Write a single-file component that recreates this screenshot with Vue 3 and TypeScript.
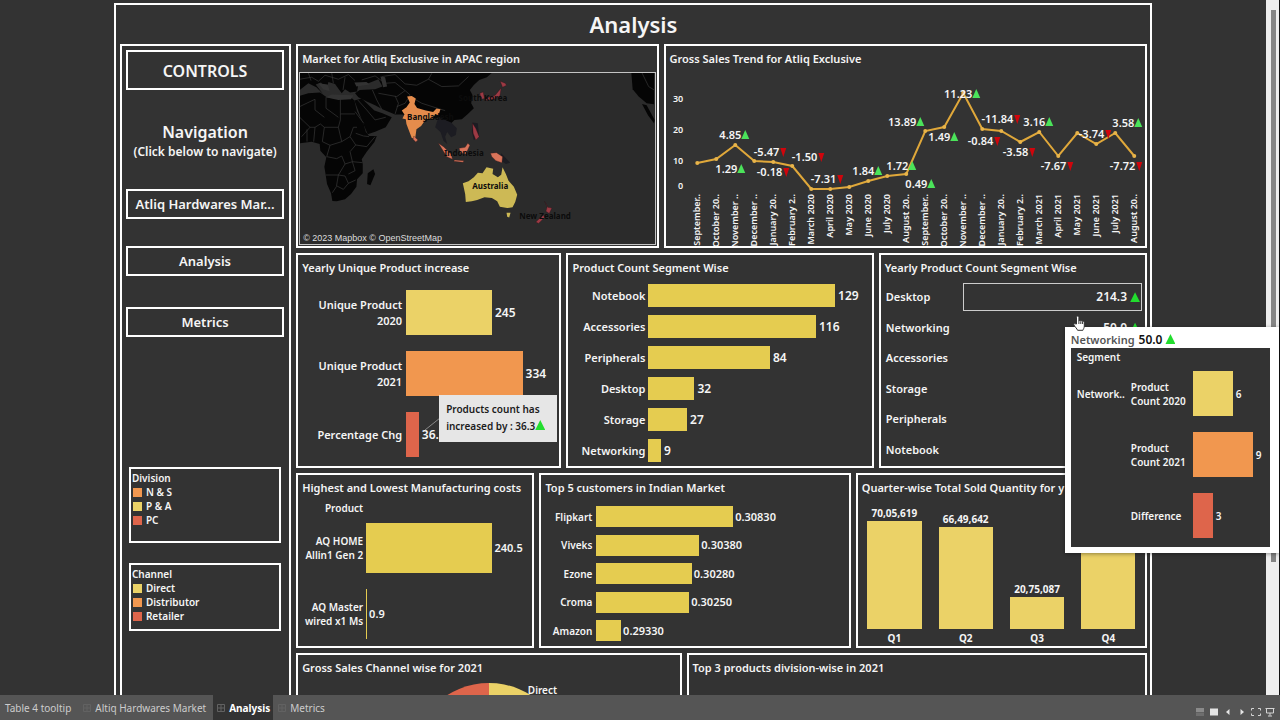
<script setup lang="ts">
interface Bar {
  label: string
  value: string
  size: number
  tone: string
}
interface Mark {
  text: string
  x: number
  y: number
  up: boolean
}

const bars = (tone: string, rows: [string, string, number][]): Bar[] =>
  rows.map(([label, value, size]) => ({ label, value, size, tone }))

const unique: Bar[] = [
  { label: 'Unique Product 2020', value: '245', size: 56, tone: 'sand' },
  { label: 'Unique Product 2021', value: '334', size: 76, tone: 'orange' },
  { label: 'Percentage Chg', value: '36.3', size: 8.3, tone: 'red' },
]
const segments = bars('gold', [
  ['Notebook', '129', 83.6],
  ['Accessories', '116', 75],
  ['Peripherals', '84', 54.4],
  ['Desktop', '32', 20.6],
  ['Storage', '27', 17.3],
  ['Networking', '9', 5.6],
])
const costs = bars('gold', [
  ['AQ HOME Allin1 Gen 2', '240.5', 76],
  ['AQ Master wired x1 Ms', '0.9', 0.6],
])
const customers = bars('gold', [
  ['Flipkart', '0.30830', 54.2],
  ['Viveks', '0.30380', 40.8],
  ['Ezone', '0.30280', 37.8],
  ['Croma', '0.30250', 36.8],
  ['Amazon', '0.29330', 9.8],
])
const counts: Bar[] = [
  { label: 'Product Count 2020', value: '6', size: 52, tone: 'sand' },
  { label: 'Product Count 2021', value: '9', size: 78, tone: 'orange' },
  { label: 'Difference', value: '3', size: 26, tone: 'red' },
]
const yearly = [
  { name: 'Desktop', value: '214.3' },
  { name: 'Networking', value: '50.0' },
  { name: 'Accessories', value: '' },
  { name: 'Storage', value: '' },
  { name: 'Peripherals', value: '' },
  { name: 'Notebook', value: '' },
]
const quarters = [
  { name: 'Q1', value: '70,05,619', size: 108 },
  { name: 'Q2', value: '66,49,642', size: 102 },
  { name: 'Q3', value: '20,75,087', size: 32 },
  { name: 'Q4', value: '', size: 90 },
]
const legends = [
  { title: 'Division', items: [['orange', 'N & S'], ['sand', 'P & A'], ['red', 'PC']] },
  { title: 'Channel', items: [['sand', 'Direct'], ['orange', 'Distributor'], ['red', 'Retailer']] },
]

const months = [
  'September..', 'October 20..', 'November ..', 'December ..', 'January 20..', 'February 2..',
  'March 2020', 'April 2020', 'May 2020', 'June 2020', 'July 2020', 'August 20..',
  'September..', 'October 20..', 'November ..', 'December ..', 'January 20..', 'February 2..',
  'March 2021', 'April 2021', 'May 2021', 'June 2021', 'July 2021', 'August 20..',
]
const levels = [97, 93, 79, 95, 96, 100, 123, 123, 121, 115, 110, 108, 65, 61, 27, 63, 65, 76, 66, 90, 67, 78, 67, 90]
const points = levels.map((y, i) => ({ x: 31 + i * 19, y }))
const trend = points.map((p) => `${p.x},${p.y}`).join(' ')
const ticks = [['30', 33], ['20', 64], ['10', 95], ['0', 120]]

const rawMarks: [string, number, number, boolean][] = [
  ['4.85', 79, 69, true], ['1.29', 75, 103, true], ['-5.47', 117, 86, false], ['-0.18', 120, 106, false],
  ['-1.50', 155, 91, false], ['-7.31', 174, 113, false], ['1.84', 212, 105, true], ['1.72', 246, 100, true],
  ['0.49', 265, 118, true], ['13.89', 254, 56, true], ['1.49', 288, 71, true], ['11.23', 310, 28, true],
  ['-0.84', 331, 75, false], ['-11.84', 351, 53, false], ['-3.58', 366, 86, false], ['3.16', 383, 56, true],
  ['-7.67', 404, 100, false], ['-3.74', 442, 68, false], ['3.58', 472, 57, true], ['-7.72', 473, 100, false],
]
const marks: Mark[] = rawMarks.map(([text, x, y, up]) => ({ text, x, y, up }))
const arrow = (m: Mark): string =>
  m.up
    ? `${m.x - 4},${m.y + 4} ${m.x},${m.y - 5} ${m.x + 4},${m.y + 4}`
    : `${m.x - 3},${m.y - 4} ${m.x},${m.y + 5} ${m.x + 3},${m.y - 4}`
</script>

<template>
  <div class="page">
    <div class="viewport">
      <main class="canvas">
        <div class="dashboard">
          <h1>Analysis</h1>
          <div class="layout">
            <aside class="sidebar">
              <h2 class="controls">CONTROLS</h2>
              <h2 class="nav-title">Navigation</h2>
              <p class="nav-hint">(Click below to navigate)</p>
              <nav>
                <button type="button">Atliq Hardwares Mar...</button>
                <button type="button">Analysis</button>
                <button type="button">Metrics</button>
              </nav>
              <section v-for="l in legends" :key="l.title" class="legend">
                <h3>{{ l.title }}</h3>
                <ul>
                  <li v-for="i in l.items" :key="i[1]"><i :class="i[0]"></i>{{ i[1] }}</li>
                </ul>
              </section>
            </aside>

            <div class="rows">
              <div class="row row-a">
                <section class="panel">
                  <h3>Market for Atliq Exclusive in APAC region</h3>
                  <div class="map">
                    <svg viewBox="0 0 354 171" preserveAspectRatio="xMidYMid slice" role="img" aria-label="Market map">
                      <g transform="translate(-5 -33) scale(.3333)">
                        <g class="land">
                          <path d="M14 168 40 160 75 158 95 172 130 178 165 170 178 182 186 215 205 250 212 275 222 288 245 288 238 306 215 335 200 358 203 372 203 400 186 418 184 440 168 462 150 478 125 484 112 483 108 460 96 432 92 405 88 380 94 352 76 332 74 312 50 305 14 310Z" />
                          <path d="M178 182 200 176 215 190 238 212 262 220 290 232 272 262 240 275 218 283 206 255Z" />
                          <path d="M14 99H590L575 112 552 120 536 135 524 150 532 165 528 190 536 205 518 222 500 238 478 240 468 250 455 245 445 238 432 232 400 240 345 240 325 224 300 224 262 208 240 196 215 185 190 172 180 160 194 150 240 148 262 140 250 118 220 130 190 132 186 155 165 158 150 148 140 160 120 132 100 126 95 150 78 128 62 134 84 162 64 142 40 130 14 150Z" />
                          <path d="M218 400 235 388 240 402 226 436 216 432Z" />
                          <path d="M1008 99H1076V193L1054 190 1030 170 1012 148Z" />
                          <path d="M1040 192 1054 196 1078 240 1076 250 1058 226Z" />
                        </g>
                        <path class="dim" d="M430 232 468 248 485 265 482 285 468 292 456 276 450 290 456 312 445 302 436 276 420 262ZM532 248 548 250 552 290 536 300 530 275ZM618 340 645 368 632 372 612 358Z" />
                        <path class="borders" d="M14 232 45 262 20 290M60 178V210L88 232M93 172V205L130 232M136 178V222H180M136 222V240L130 262H88L76 252 60 262 45 262M14 200 60 178M36 268V305M60 262 56 305M88 262 82 305 105 316 140 305 130 262M140 305 165 290 175 262 186 262M165 290 182 315 165 335 172 365M105 316 95 350 125 356 140 348 150 372 130 405H92M130 405 124 440 112 458M130 405 150 408 160 430 145 448 126 438M172 365 202 368M150 372 172 365 180 392 160 402M182 315 215 320 240 290M182 280 205 288 222 290M160 430 182 420M180 215 206 250M188 180 215 210 240 240 272 232M200 120 240 108 270 130 300 128 330 152 305 170 250 160M232 150 245 180 260 208M300 168 310 190 300 222M330 152 345 165 330 190 305 200M260 110 300 104 330 132 365 136 400 118 410 100M400 118 440 140 490 138 520 110M345 170 380 190 430 206 450 212M14 118 50 112 70 124 90 106 130 118 160 104 180 122M40 99 48 122M110 99 115 130M150 112 144 150M1040 99 1060 140 1076 150" />
                        <path class="blot" d="M110 164 175 166 168 178 130 180 92 172ZM70 130 98 134 104 154 84 148ZM178 128 214 126 224 134 184 140ZM256 110 270 112 276 140 264 142Z" />
                        <path class="orange-land" d="M336 170 350 168 362 176 358 192 366 204 392 212 414 216 424 206 436 208 430 226 420 222 414 236 392 238 378 258 364 268 360 296 350 294 334 252 332 238 322 236 328 224 320 212 334 202 344 188Z" />
                        <path class="red-land" d="M356 288 368 300 362 306 354 298ZM430 310 445 320 468 342 472 358 455 350ZM478 360 506 362 504 367 476 364ZM492 325 510 322 518 310 524 316 512 342 496 340ZM586 340 604 338 622 350 620 368 602 362 590 350Z" />
                        <path class="crimson" d="M615 124 630 130 634 136 622 142ZM618 144 614 168 596 178 570 182 574 174 600 166ZM554 160 564 156 568 176 558 178ZM532 250 542 266 552 290 542 300 534 280ZM748 484 758 502 770 504 762 520 752 514 756 500ZM744 524 748 532 730 550 722 546Z" />
                        <path class="yellow-land" d="M503 430 520 424 536 412 548 398 562 400 574 382 594 386 592 402 608 412 618 404 622 382 632 402 640 422 656 440 666 464 660 486 652 502 636 504 614 500 606 484 600 480 590 474 568 472 546 480 530 484 512 486 510 462ZM634 518 646 518 642 532 636 530Z" />
                      </g>
                      <text x="107" y="47">Bangladesh</text>
                      <text x="207" y="28" text-anchor="end">South Korea</text>
                      <text x="144" y="83">Indonesia</text>
                      <text x="172" y="116">Australia</text>
                      <text x="219" y="146">New Zealand</text>
                    </svg>
                    <small>© 2023 Mapbox © OpenStreetMap</small>
                  </div>
                </section>
                <section class="panel">
                  <h3>Gross Sales Trend for Atliq Exclusive</h3>
                  <svg class="trend" viewBox="0 0 479 180" role="img" aria-label="Gross sales trend">
                    <text v-for="t in ticks" :key="t[0]" class="axis" x="17" :y="Number(t[1]) + 3" text-anchor="end">{{ t[0] }}</text>
                    <text
                      v-for="(m, i) in months"
                      :key="i"
                      class="axis"
                      text-anchor="end"
                      :transform="`translate(${34 + i * 19} 128) rotate(-90)`"
                    >{{ m }}</text>
                    <polyline :points="trend" />
                    <circle v-for="(p, i) in points" :key="i" :cx="p.x" :cy="p.y" r="2" />
                    <g v-for="m in marks" :key="m.text">
                      <polygon :points="arrow(m)" :class="m.up ? 'up' : 'down'" />
                      <text :x="m.x - 4" :y="m.y + 4" text-anchor="end">{{ m.text }}</text>
                    </g>
                  </svg>
                </section>
              </div>

              <div class="row row-b">
                <section class="panel">
                  <h3>Yearly Unique Product increase</h3>
                  <div class="chart unique">
                    <div v-for="b in unique" :key="b.label" class="bar-row">
                      <span class="name">{{ b.label }}</span>
                      <span class="track"><i :class="b.tone" :style="{ width: b.size + '%' }"></i>{{ b.value }}</span>
                    </div>
                  </div>
                  <svg class="leader" viewBox="0 0 16 14"><path d="M1 13 16 1" /></svg>
                  <div class="note">Products count has increased by : 36.3<b class="tri"></b></div>
                </section>
                <section class="panel">
                  <h3>Product Count Segment Wise</h3>
                  <div class="chart segments">
                    <div v-for="b in segments" :key="b.label" class="bar-row">
                      <span class="name">{{ b.label }}</span>
                      <span class="track"><i :class="b.tone" :style="{ width: b.size + '%' }"></i>{{ b.value }}</span>
                    </div>
                  </div>
                </section>
                <section class="panel">
                  <h3>Yearly Product Count Segment Wise</h3>
                  <table>
                    <tbody>
                      <tr v-for="(y, i) in yearly" :key="y.name">
                        <th scope="row">{{ y.name }}</th>
                        <td>
                          <div :class="{ picked: i === 0 }" class="cell">
                            <template v-if="y.value">{{ y.value }}<b class="tri"></b></template>
                          </div>
                        </td>
                      </tr>
                    </tbody>
                  </table>
                  <div class="popup" role="tooltip">
                    <p><span>Networking</span><strong>50.0</strong><b class="tri"></b></p>
                    <div class="popup-body">
                      <div class="popup-head">Segment</div>
                      <div class="popup-grid">
                        <span class="group">Network..</span>
                        <div class="chart counts">
                          <div v-for="b in counts" :key="b.label" class="bar-row">
                            <span class="name">{{ b.label }}</span>
                            <span class="track"><i :class="b.tone" :style="{ width: b.size + '%' }"></i>{{ b.value }}</span>
                          </div>
                        </div>
                      </div>
                    </div>
                  </div>
                  <svg class="cursor" viewBox="0 0 12 16">
                    <path d="M3.5 9V2.2a1.2 1.2 0 0 1 2.4 0V6a1 1 0 0 1 1.9.2 1 1 0 0 1 1.8.4 1 1 0 0 1 1.7.7V11c0 2-1 3-1.4 4.3H4.6C4 13.6 2.2 12.2.9 10c-.5-1 .6-1.8 1.4-1.2Z" />
                    <path d="M5.9 6v3M7.8 6.5V9M9.6 7v2" />
                  </svg>
                </section>
              </div>

              <div class="row row-c">
                <section class="panel">
                  <h3>Highest and Lowest Manufacturing costs</h3>
                  <div class="costs-head">Product</div>
                  <div class="chart costs">
                    <div v-for="b in costs" :key="b.label" class="bar-row">
                      <span class="name">{{ b.label }}</span>
                      <span class="track"><i :class="b.tone" :style="{ width: b.size + '%' }"></i>{{ b.value }}</span>
                    </div>
                  </div>
                </section>
                <section class="panel">
                  <h3>Top 5 customers in Indian Market</h3>
                  <div class="chart customers">
                    <div v-for="b in customers" :key="b.label" class="bar-row">
                      <span class="name">{{ b.label }}</span>
                      <span class="track"><i :class="b.tone" :style="{ width: b.size + '%' }"></i>{{ b.value }}</span>
                    </div>
                  </div>
                </section>
                <section class="panel">
                  <h3>Quarter-wise Total Sold Quantity for y</h3>
                  <div class="quarters">
                    <div v-for="q in quarters" :key="q.name">
                      <span>{{ q.value }}</span>
                      <i class="sand" :style="{ height: q.size + 'px' }"></i>
                      <span>{{ q.name }}</span>
                    </div>
                  </div>
                </section>
              </div>

              <div class="row row-d">
                <section class="panel">
                  <h3>Gross Sales Channel wise for 2021</h3>
                  <div class="pie">
                    <svg viewBox="0 0 156 156" role="img" aria-label="Sales by channel">
                      <path class="slice-red" d="M78 78V0A78 78 0 0 0 0 78Z" />
                      <path class="slice-sand" d="M78 78V0A78 78 0 0 1 156 78Z" />
                      <path class="slice-orange" d="M78 78H0A78 78 0 0 0 156 78Z" />
                    </svg>
                    <span>Direct</span>
                  </div>
                </section>
                <section class="panel">
                  <h3>Top 3 products division-wise in 2021</h3>
                </section>
              </div>
            </div>
          </div>
        </div>
      </main>
      <div class="scroll" aria-hidden="true"><i></i></div>
    </div>

    <footer>
      <button type="button" class="tab first">Table 4 tooltip</button>
      <button type="button" class="tab second">
        <svg class="grid-icon" viewBox="0 0 8 8"><path d="M.5.5h7v7h-7zM4 .5v7M.5 4h7" /></svg>Altiq Hardwares Market
      </button>
      <button type="button" class="tab active">
        <svg class="grid-icon" viewBox="0 0 8 8"><path d="M.5.5h7v7h-7zM4 .5v7M.5 4h7" /></svg>Analysis
      </button>
      <button type="button" class="tab">
        <svg class="grid-icon" viewBox="0 0 8 8"><path d="M.5.5h7v7h-7zM4 .5v7M.5 4h7" /></svg>Metrics
      </button>
      <div class="tools">
        <button type="button" aria-label="Show filmstrip"><svg viewBox="0 0 10 10"><path class="faint" d="M1 1h8v4H1z" /><path class="fainter" d="M1 5.5h8V9H1z" /></svg></button>
        <button type="button" aria-label="Show tabs"><svg viewBox="0 0 10 10"><path d="M1 1.5h8v7H1z" /></svg></button>
        <button type="button" aria-label="Previous"><svg viewBox="0 0 10 10"><path d="M6.5 2v6L3 5z" /></svg></button>
        <button type="button" aria-label="Next"><svg viewBox="0 0 10 10"><path d="M3.5 2v6L7 5z" /></svg></button>
        <button type="button" aria-label="Full screen"><svg viewBox="0 0 10 10"><path class="line" d="M.5 3.5v-2H3M7 1.5h2.5v2M9.5 6.5v2H7M3 8.5H.5v-2" /></svg></button>
        <button type="button" aria-label="Presentation mode"><svg viewBox="0 0 10 10"><path class="line" d="M.5 1.5h9M1.5 1.5V6h7V1.5M5 6v2.5M3 9h4" /></svg></button>
      </div>
    </footer>
  </div>
</template>

<style>
html,
body {
  margin: 0;
  background: #333;
}
</style>

<style scoped>
.page {
  display: flex;
  flex-direction: column;
  height: 100vh;
  overflow: hidden;
  color: #f5f5f5;
  background: #333;
  font: 600 12px/16px 'Noto Sans', 'Open Sans', sans-serif;
}
.page * {
  box-sizing: border-box;
}
h1,
h2,
h3,
p,
ul {
  margin: 0;
  padding: 0;
  font-weight: 600;
  list-style: none;
}
button {
  font: inherit;
  color: inherit;
  background: none;
  border: 0;
  padding: 0;
}
.viewport {
  display: flex;
  flex: 1;
  min-height: 0;
  overflow: hidden;
}
.canvas {
  flex: 1;
  min-width: 0;
}
.dashboard {
  margin: 3px 9% 0;
  padding: 0 3px 4px 4px;
  border: 2px solid #fff;
}
h1 {
  height: 39px;
  font-size: 22px;
  line-height: 39px;
  text-align: center;
}
.layout {
  display: grid;
  grid-template-columns: minmax(0, 171fr) minmax(0, 850fr);
  gap: 5px;
}
.sidebar {
  border: 2px solid #fff;
  padding: 4px 5px 0 4px;
}
.controls {
  height: 40px;
  border: 2px solid #fff;
  font-size: 16px;
  line-height: 38px;
  text-align: center;
}
.nav-title {
  margin-top: 30px;
  font-size: 16px;
  line-height: 24px;
  text-align: center;
}
.nav-hint {
  text-align: center;
}
nav {
  display: grid;
  gap: 27px;
  margin: 29px 0 130px;
}
nav button {
  height: 30px;
  border: 2px solid #fff;
  padding: 0 2px;
  font-size: 13px;
  white-space: nowrap;
}
nav button:last-child {
  margin-top: 4px;
}
.legend {
  height: 76px;
  margin: 0 3px 20px;
  border: 2px solid #fff;
  padding: 2px 1px;
  font-size: 10px;
  line-height: 14px;
}
.legend + .legend {
  height: 68px;
}
.legend h3 {
  font-size: 10px;
}
.legend li {
  display: flex;
  align-items: center;
  gap: 4px;
  padding-left: 1px;
}
.legend i {
  width: 9px;
  height: 9px;
}
.orange {
  background: #f1974f;
}
.sand {
  background: #ebd267;
}
.gold {
  background: #e5cc50;
}
.red {
  background: #de654b;
}
.rows {
  display: grid;
  grid-template-rows: 204px 215px 175px 200px;
  gap: 5px;
}
.row {
  display: grid;
  gap: 5px;
  min-width: 0;
}
.row-a {
  grid-template-columns: minmax(0, 362fr) minmax(0, 483fr);
}
.row-b {
  grid-template-columns: minmax(0, 265fr) minmax(0, 307fr) minmax(0, 268fr);
}
.row-c {
  grid-template-columns: minmax(0, 238fr) minmax(0, 311fr) minmax(0, 291fr);
}
.row-d {
  grid-template-columns: minmax(0, 385fr) minmax(0, 460fr);
}
.panel {
  position: relative;
  min-width: 0;
  border: 2px solid #fff;
}
.panel h3 {
  height: 20px;
  padding: 4px 4px 0;
  font-size: 11px;
  line-height: 17px;
  white-space: nowrap;
}
.map {
  position: relative;
  height: 173px;
  margin: 6px 1px 0;
  border: 1px solid #c4c4c4;
  background: #2b2b2b;
}
.map svg {
  display: block;
  width: 100%;
  height: 100%;
}
.map text {
  font-size: 8px;
  font-weight: 700;
  fill: #0c0c0c;
}
.map small {
  position: absolute;
  left: 3px;
  bottom: 0;
  font: 9px/12px 'Liberation Sans', sans-serif;
  color: #ddd;
}
.land {
  fill: #050505;
}
.dim {
  fill: #1c1c22;
}
.borders {
  fill: none;
  stroke: #3a3a3a;
  stroke-width: 2;
}
.blot {
  fill: #333;
}
.orange-land {
  fill: #e58c4c;
}
.red-land {
  fill: #d9745a;
  stroke: #401818;
}
.crimson {
  fill: #9c3a44;
  stroke: #2a1015;
}
.yellow-land {
  fill: #cdb955;
}
.trend {
  display: block;
  width: 100%;
  max-height: 180px;
}
.trend text {
  font-size: 11px;
  fill: #f5f5f5;
}
.trend .axis {
  font-size: 9px;
}
.trend polyline {
  fill: none;
  stroke: #e0a83a;
  stroke-width: 2;
}
.trend circle {
  fill: #e8b44a;
}
.up {
  fill: #4be35a;
}
.down {
  fill: #d0050c;
}
.chart {
  display: flex;
  flex-direction: column;
  justify-content: space-between;
}
.bar-row {
  display: flex;
  align-items: center;
}
.name {
  flex: none;
  text-align: right;
}
.track {
  display: flex;
  flex: 1;
  align-items: center;
  gap: 3px;
  height: 100%;
  min-width: 0;
}
.track i {
  flex: none;
  height: 100%;
}
.unique {
  height: 167px;
  margin-top: 15px;
}
.unique .bar-row {
  height: 45px;
}
.unique .name {
  width: 104px;
  margin-right: 4px;
  padding-left: 16px;
  font-size: 11px;
}
.segments {
  height: 178px;
  margin-top: 9px;
}
.segments .bar-row {
  height: 23px;
}
.segments .name {
  width: 77px;
  margin-right: 3px;
  font-size: 11px;
}
.costs-head {
  width: 65px;
  margin-top: 5px;
  font-size: 10px;
  text-align: right;
}
.costs {
  height: 116px;
  margin-top: 7px;
  font-size: 11px;
}
.costs .bar-row {
  height: 50px;
}
.costs .name {
  width: 65px;
  margin-right: 3px;
  font-size: 10px;
  line-height: 14px;
}
.costs .track,
.customers .track {
  gap: 2px;
}
.customers {
  height: 135px;
  margin-top: 11px;
  font-size: 11px;
}
.customers .bar-row {
  height: 21px;
}
.customers .name {
  width: 51px;
  margin-right: 4px;
  font-size: 10px;
}
.leader {
  position: absolute;
  left: 126px;
  top: 162px;
  width: 16px;
  height: 14px;
  fill: none;
  stroke: #8a8a8a;
}
.note {
  position: absolute;
  left: 141px;
  top: 140px;
  width: 118px;
  height: 47px;
  padding: 6px 7px;
  background: #e6e6e6;
  color: #1c1c1c;
  font-size: 10px;
  line-height: 17px;
}
.tri {
  display: inline-block;
  width: 10px;
  height: 10px;
  margin-left: 3px;
  background: #22dd2e;
  clip-path: polygon(50% 0, 100% 100%, 0 100%);
}
.note .tri {
  margin-left: 0;
}
table {
  width: 100%;
  height: 183px;
  margin-top: 7px;
  border-collapse: collapse;
}
th {
  width: 82px;
  padding: 0 0 0 5px;
  font-size: 11px;
  font-weight: 600;
  text-align: left;
}
td {
  padding: 0 3px 0 0;
}
.cell {
  display: flex;
  align-items: center;
  justify-content: flex-end;
  height: 28px;
  padding-right: 1px;
  border: 1px solid transparent;
}
.picked {
  border-color: #ccc;
}
.popup {
  position: absolute;
  z-index: 2;
  left: 184px;
  top: 72px;
  width: 214px;
  padding: 5px 9px 6px 6px;
  background: #fff;
  color: #555;
  box-shadow: 0 1px 4px rgba(0, 0, 0, 0.4);
}
.popup p span {
  font-size: 11px;
}
.popup strong {
  margin-left: 4px;
  font-weight: 600;
  color: #111;
}
.popup-body {
  height: 199px;
  background: #333;
  color: #f5f5f5;
  font-size: 10px;
  line-height: 14px;
}
.popup-head {
  padding: 2px 6px 0;
  height: 23px;
}
.popup-grid {
  display: flex;
}
.group {
  width: 60px;
  padding: 16px 0 0 6px;
}
.counts {
  flex: 1;
  height: 167px;
}
.counts .bar-row {
  height: 45px;
}
.counts .name {
  width: 58px;
  margin-right: 4px;
  text-align: left;
}
.cursor {
  position: absolute;
  z-index: 3;
  left: 192px;
  top: 60px;
  width: 12px;
  height: 16px;
  fill: #fff;
  stroke: #333;
}
.quarters {
  display: grid;
  grid-template-columns: repeat(4, 1fr);
  height: 151px;
  padding: 0 1px;
  font-size: 10px;
  font-weight: 700;
}
.quarters div {
  display: flex;
  flex-direction: column;
  align-items: center;
  justify-content: flex-end;
}
.quarters i {
  width: 76%;
}
.quarters span:last-child {
  padding-top: 1px;
}
.pie {
  position: relative;
  display: flex;
  justify-content: center;
  padding-top: 8px;
}
.pie svg {
  width: 156px;
  height: 156px;
}
.pie span {
  position: absolute;
  left: calc(50% + 39px);
  top: 7px;
  font-size: 10px;
}
.slice-red {
  fill: #de654b;
}
.slice-sand {
  fill: #ebd267;
}
.slice-orange {
  fill: #f1974f;
}
.scroll {
  width: 14px;
  padding: 10px 3px 0 5px;
  border-right: 1px solid #111;
  background: #eee;
}
.scroll i {
  display: block;
  height: 552px;
  background: #858585;
}
footer {
  display: flex;
  height: 25px;
  background: #555;
  color: #ccc;
  font-size: 10px;
  font-weight: 400;
}
.tab {
  display: flex;
  align-items: center;
  gap: 4px;
  padding: 0 5px;
}
.first {
  padding-right: 8px;
}
.second {
  padding: 0 7px 0 4px;
}
.active {
  padding: 0 3px 0 4px;
  background: #333;
  color: #fff;
  font-weight: 700;
}
.grid-icon {
  width: 8px;
  height: 8px;
  fill: none;
  stroke: #626262;
}
.tools {
  display: flex;
  align-items: center;
  gap: 4px;
  margin: 8px 5px 0 auto;
}
.tools button,
.tools svg {
  display: block;
  width: 10px;
  height: 10px;
  fill: #e4e4e4;
}
.tools .faint {
  fill: #8a8a8a;
}
.tools .fainter {
  fill: #6e6e6e;
}
.tools .line {
  fill: none;
  stroke: #d4d4d4;
}
</style>
